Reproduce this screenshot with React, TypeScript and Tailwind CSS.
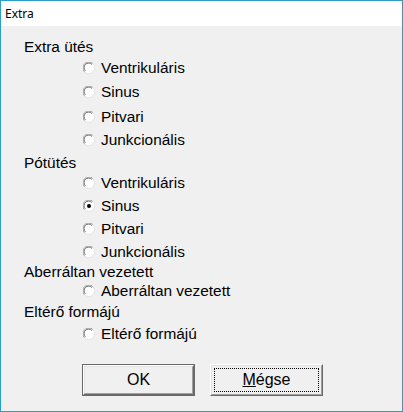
import React from "react";

const font = { fontFamily: '"Liberation Sans", Arial, sans-serif' };

function Radio({ checked }: { checked?: boolean }) {
  return (
    <svg width="12" height="12" viewBox="0 0 12 12" className="shrink-0">
      <circle cx="6" cy="6" r="5.5" fill="#ffffff" />
      <path d="M1.6 9.9 A5.5 5.5 0 0 1 9.9 1.6" fill="none" stroke="#a0a0a0" strokeWidth="1" />
      <path d="M9.9 1.6 A5.5 5.5 0 0 1 1.6 9.9" fill="none" stroke="#e3e3e3" strokeWidth="1" />
      <path d="M2.4 8.9 A4.3 4.3 0 0 1 8.9 2.4" fill="none" stroke="#696969" strokeWidth="1" />
      {checked && <circle cx="6" cy="6" r="2" fill="#000000" />}
    </svg>
  );
}

function Heading({ text, mt }: { text: string; mt: string }) {
  return (
    <div className={`h-[20px] flex items-center pl-[23px] ${mt}`}>
      <span>{text}</span>
    </div>
  );
}

function Option({ text, mt, checked }: { text: string; mt: string; checked?: boolean }) {
  return (
    <div className={`h-[20px] flex items-center pl-[82px] gap-[6px] ${mt}`}>
      <Radio checked={checked} />
      <span>{text}</span>
    </div>
  );
}

export default function App() {
  return (
    <div className="w-[403px] h-[412px] border border-[#2a9ec6] bg-[#f0f0f0] flex flex-col">
      <div className="h-[25px] bg-white flex items-center pl-[4px] text-[12px] text-black" style={{ fontFamily: '"Noto Sans", "Liberation Sans", sans-serif' }}>
        Extra
      </div>
      <div className="flex flex-col text-[15.4px] text-black" style={font}>
        <Heading text="Extra ütés" mt="mt-[11px]" />
        <Option text="Ventrikuláris" mt="mt-[1px]" />
        <Option text="Sinus" mt="mt-[4px]" />
        <Option text="Pitvari" mt="mt-[5px]" />
        <Option text="Junkcionális" mt="mt-[3px]" />
        <Heading text="Pótütés" mt="mt-[3px]" />
        <Option text="Ventrikuláris" mt="mt-0" />
        <Option text="Sinus" mt="mt-[3px]" checked />
        <Option text="Pitvari" mt="mt-[3px]" />
        <Option text="Junkcionális" mt="mt-[3px]" />
        <Heading text="Aberráltan vezetett" mt="mt-0" />
        <Option text="Aberráltan vezetett" mt="mt-[-1px]" />
        <Heading text="Eltérő formájú" mt="mt-[1px]" />
        <Option text="Eltérő formájú" mt="mt-[2px]" />
        <div className="flex mt-[20px] pl-[81px] gap-[15px]">
          <div className="w-[113px] h-[32px] border border-[#696969]">
            <div className="w-full h-full border border-t-white border-l-white border-r-[#696969] border-b-[#696969]">
              <div className="w-full h-full border border-t-[#e3e3e3] border-l-[#e3e3e3] border-r-[#a0a0a0] border-b-[#a0a0a0] flex items-center justify-center text-[16px]">
                OK
              </div>
            </div>
          </div>
          <div className="w-[113px] h-[32px] border border-t-white border-l-white border-r-[#696969] border-b-[#696969]">
            <div className="w-full h-full border border-t-[#e3e3e3] border-l-[#e3e3e3] border-r-[#a0a0a0] border-b-[#a0a0a0] p-[2px]">
              <div className="w-full h-full border border-dotted border-black flex items-center justify-center text-[16px]">
                <span><span className="underline">M</span>égse</span>
              </div>
            </div>
          </div>
        </div>
      </div>
    </div>
  );
}
